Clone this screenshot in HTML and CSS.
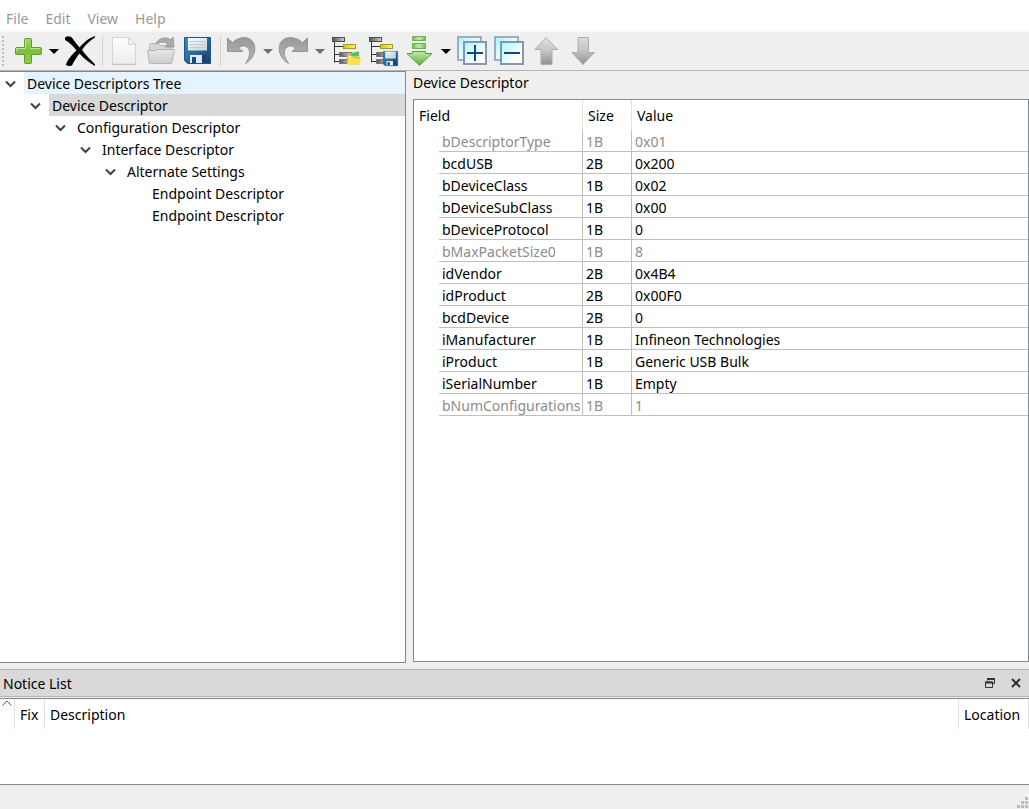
FILE: index.html
```html
<!DOCTYPE html>
<html lang="en">
<head>
<meta charset="utf-8">
<title>Device Descriptors</title>
<link rel="stylesheet" href="styles.css">
</head>
<body>
<svg class="defs" aria-hidden="true">
  <defs>
    <linearGradient id="green" x1="0" y1="0" x2="0" y2="1"><stop offset="0" stop-color="#a5d46b"/><stop offset=".5" stop-color="#7fbf3c"/><stop offset="1" stop-color="#94cd48"/></linearGradient>
    <linearGradient id="greenArrow" x1="0" y1="0" x2="0" y2="1"><stop offset="0" stop-color="#c6e8b6"/><stop offset="1" stop-color="#5aae2e"/></linearGradient>
    <linearGradient id="greenBar" x1="0" y1="0" x2="1" y2="0"><stop offset="0" stop-color="#6fbb4a"/><stop offset=".5" stop-color="#c4e9b2"/><stop offset="1" stop-color="#6fbb4a"/></linearGradient>
    <linearGradient id="paper" x1="0" y1="0" x2="0" y2="1"><stop offset="0" stop-color="#fdfdfd"/><stop offset="1" stop-color="#ededed"/></linearGradient>
    <linearGradient id="folder" x1="0" y1="0" x2="0" y2="1"><stop offset="0" stop-color="#e6e6e6"/><stop offset="1" stop-color="#cdcdcd"/></linearGradient>
    <linearGradient id="disk" x1="0" y1="0" x2="1" y2="1"><stop offset="0" stop-color="#3c8fc6"/><stop offset=".5" stop-color="#246a9f"/><stop offset="1" stop-color="#163f6b"/></linearGradient>
    <linearGradient id="label" x1="0" y1="0" x2="1" y2="1"><stop offset="0" stop-color="#ffffff"/><stop offset="1" stop-color="#c9d2d4"/></linearGradient>
    <linearGradient id="curve" x1="0" y1="0" x2="0" y2="1"><stop offset="0" stop-color="#999999"/><stop offset="1" stop-color="#b9b9b9"/></linearGradient>
    <linearGradient id="node" x1="0" y1="0" x2="1" y2="0"><stop offset="0" stop-color="#555555"/><stop offset="1" stop-color="#d2d2d2"/></linearGradient>
    <linearGradient id="yellow" x1="0" y1="0" x2="1" y2="0"><stop offset="0" stop-color="#d2c600"/><stop offset="1" stop-color="#fff36a"/></linearGradient>
    <linearGradient id="gold" x1="0" y1="0" x2="0" y2="1"><stop offset="0" stop-color="#fff06a"/><stop offset="1" stop-color="#f1cc28"/></linearGradient>
    <linearGradient id="pane" x1="0" y1="0" x2="1" y2="1"><stop offset="0" stop-color="#a4f5ff"/><stop offset=".7" stop-color="#ffffff"/></linearGradient>
    <linearGradient id="grayUp" x1="0" y1="0" x2="0" y2="1"><stop offset="0" stop-color="#e2e2e2"/><stop offset=".5" stop-color="#c4c4c4"/><stop offset="1" stop-color="#929292"/></linearGradient>
    <linearGradient id="grayDown" x1="0" y1="0" x2="0" y2="1"><stop offset="0" stop-color="#dadada"/><stop offset=".5" stop-color="#c4c4c4"/><stop offset="1" stop-color="#8f8f8f"/></linearGradient>
    <g id="hierarchy">
      <path d="M4.500 7v20.500M4.500 11.500h9M4.500 19.500h5M4.500 26.500h5" fill="none" stroke="#333"/>
      <rect x="2.500" y="2.500" width="12" height="4" fill="url(#node)" stroke="#4c4c4c"/>
      <rect x="13.500" y="9.500" width="12" height="4" fill="url(#yellow)" stroke="#a39a20"/>
      <rect x="9.500" y="17.500" width="12" height="4" fill="url(#node)" stroke="#777"/>
      <rect x="9.500" y="24.500" width="12" height="4" fill="url(#node)" stroke="#777"/>
    </g>
    <g id="floppy">
      <path d="M2.500 2.500h26v26h-23l-3-3z" fill="url(#disk)" stroke="#1c5687"/>
      <path d="M6 3h19v12.500H6z" fill="url(#label)"/>
      <path d="M7 6.500h17M7 9.500h17M7 12.500h17" stroke="#c5cccd"/>
      <path d="M8 20h12v8H8z" fill="#e4eaf4"/>
      <path d="M20 20h4v8h-4z" fill="#243d72"/>
      <path d="M10 22h4v6h-4z" fill="#24428c"/>
    </g>
    <path id="triangle" d="M2 14h10l-5 5z"/>
  </defs>
</svg>

<nav class="menubar" aria-label="Menu bar">
  <button class="menu" type="button">File</button>
  <button class="menu" type="button">Edit</button>
  <button class="menu" type="button">View</button>
  <button class="menu" type="button">Help</button>
</nav>

<div class="toolbar" role="toolbar" aria-label="Main toolbar">
  <span class="grip"></span>
  <button class="tool" type="button" aria-label="Add"><svg viewBox="0 0 32 32"><path d="M12.500 4.500q0-1 1-1h5q1 0 1 1v8h8.500q1.500 0 1.500 1.500v4q0 1.500-1.500 1.500h-8.500v8q0 1-1 1h-5q-1 0-1-1v-8H4.500q-1 0-1-1.500v-4q0-1.500 1-1.500h8z" fill="url(#green)" stroke="#58a01f"/><path d="M13.500 4.500v9h-9v3M18.500 13.500h9.500" fill="none" stroke="#c3e59a"/></svg></button>
  <button class="drop" type="button" aria-label="Add options"><svg viewBox="0 0 15 32"><use href="#triangle"/></svg></button>
  <button class="tool" type="button" aria-label="Delete"><svg viewBox="0 0 32 32"><path d="M1 2.500C4 .500 7 1 9 4c2 3 4 5.500 6.500 8.500C19.500 8 24.500 3 31 1v1.500C26.500 5 21.500 9.500 18 15c4 5.500 9 10 13 14.500v1.500C25.500 28 20 23.500 15.500 18.500 12 23 9.500 27 8 30.500c-2 .800-4.500.500-6-.5C3 25 8 19.500 12.500 15.500 9 11 5.500 7.500 1 5z" fill="#000"/></svg></button>
  <span class="separator"></span>
  <button class="tool" type="button" aria-label="New"><svg viewBox="0 0 32 32"><path d="M4.500 2.500h16l7 7v19.500h-23z" fill="url(#paper)" stroke="#d4d4d4"/><path d="M20.500 2.500q1 3-.500 7 4-1 7.500 0z" fill="#f7f7f7" stroke="#cfcfcf"/><path d="M4 29.500h24" stroke="#c5c5c5"/></svg></button>
  <button class="tool" type="button" aria-label="Open"><svg viewBox="0 0 32 32"><path d="M4.500 28V10.500l1-2h8l2 2h11v6" fill="#d5d5d5" stroke="#b6b6b6"/><path d="M11 9c2-6 10-8 15-4l2-3 1 10h-9l3-3c-4-3-8-2-12 0z" fill="#aaa" stroke="#999"/><path d="M2.500 15.500h8l2-1h17L26.500 28.500H4.500z" fill="url(#folder)" stroke="#b4b4b4"/></svg></button>
  <button class="tool" type="button" aria-label="Save"><svg viewBox="0 0 32 32"><use href="#floppy"/></svg></button>
  <span class="separator"></span>
  <button class="tool" type="button" aria-label="Undo"><svg viewBox="0 0 32 32"><path d="M1.500 3l5 4.500C14 .500 25 1 28 9c2.500 7-1 15-8.500 19.500 4.500-6.500 5.500-12 2.500-15.500-3-3-6.500-2.500-9.500 0l4.500 3.500H1.500z" fill="url(#curve)" stroke="#959595"/></svg></button>
  <button class="drop muted" type="button" aria-label="Undo history"><svg viewBox="0 0 15 32"><use href="#triangle"/></svg></button>
  <button class="tool" type="button" aria-label="Redo"><svg viewBox="0 0 32 32"><path d="M29.500 3l-5 4.500C17 .500 5 1 2 9c-2.500 7 1 15 8.500 19.500C6 22 5 16.500 8 13c3-3 6.500-2.500 9.500 0L14 16.500h15.500z" fill="url(#curve)" stroke="#959595"/></svg></button>
  <button class="drop muted" type="button" aria-label="Redo history"><svg viewBox="0 0 15 32"><use href="#triangle"/></svg></button>
  <button class="tool" type="button" aria-label="Load descriptor"><svg viewBox="0 0 32 32"><use href="#hierarchy"/><path d="M21 18l8-1.500v5h-7z" fill="#4cc65e"/><path d="M17.500 29.500V20.500h4l1.500 2h6.500v7z" fill="url(#gold)" stroke="#dfb82a"/><path d="M17 30l2-6h12l-1.500 6z" fill="#fbe04c"/></svg></button>
  <button class="tool" type="button" aria-label="Save descriptor"><svg viewBox="0 0 32 32"><use href="#hierarchy"/><use href="#floppy" transform="translate(15 15) scale(.55)"/></svg></button>
  <button class="tool" type="button" aria-label="Import"><svg viewBox="0 0 32 32"><path d="M8.500 1.500h13v4h-13z" fill="url(#greenBar)" stroke="#69b548"/><path d="M8.500 8.500h13v5h-13z" fill="url(#greenBar)" stroke="#69b548"/><path d="M8.500 16.500h13v2h6.500L15.500 30.500 3 18.500h5.500z" fill="url(#greenArrow)" stroke="#55a331"/></svg></button>
  <button class="drop" type="button" aria-label="Import options"><svg viewBox="0 0 15 32"><use href="#triangle"/></svg></button>
  <button class="tool" type="button" aria-label="Expand all"><svg viewBox="0 0 32 32"><path d="M2 2h23v23H2z" fill="url(#pane)" stroke="#9dabc4" stroke-width="2"/><path d="M8 7h22v22H8z" fill="url(#pane)" stroke="#8795b2" stroke-width="2"/><path d="M11 18h16M19 10v16" stroke="#0c4a80" stroke-width="2"/></svg></button>
  <button class="tool" type="button" aria-label="Collapse all"><svg viewBox="0 0 32 32"><path d="M2 2h23v23H2z" fill="url(#pane)" stroke="#9dabc4" stroke-width="2"/><path d="M8 7h22v22H8z" fill="url(#pane)" stroke="#8795b2" stroke-width="2"/><path d="M11 18h16" stroke="#0c4a80" stroke-width="2"/></svg></button>
  <button class="tool" type="button" aria-label="Move up"><svg viewBox="0 0 32 32"><path d="M16 2.500L27.500 14.500h-5.500v15H11v-15H5z" fill="url(#grayUp)" stroke="#adadad" stroke-linejoin="round"/></svg></button>
  <button class="tool" type="button" aria-label="Move down"><svg viewBox="0 0 32 32"><path d="M11 2.500h10.500v15h6L16 29.500 5 17.500h6z" fill="url(#grayDown)" stroke="#adadad" stroke-linejoin="round"/></svg></button>
</div>

<main class="workspace">
  <section class="tree" aria-label="Device descriptors">
    <ul class="tree-list">
      <li><div class="node hover"><button class="toggle" type="button" aria-label="Collapse"><svg viewBox="0 0 11 8"><path d="M1 1.500L5.500 6 10 1.500"/></svg></button><span class="node-label">Device Descriptors Tree</span></div>
        <ul>
          <li><div class="node selected"><button class="toggle" type="button" aria-label="Collapse"><svg viewBox="0 0 11 8"><path d="M1 1.500L5.500 6 10 1.500"/></svg></button><span class="node-label">Device Descriptor</span></div>
            <ul>
              <li><div class="node"><button class="toggle" type="button" aria-label="Collapse"><svg viewBox="0 0 11 8"><path d="M1 1.500L5.500 6 10 1.500"/></svg></button><span class="node-label">Configuration Descriptor</span></div>
                <ul>
                  <li><div class="node"><button class="toggle" type="button" aria-label="Collapse"><svg viewBox="0 0 11 8"><path d="M1 1.500L5.500 6 10 1.500"/></svg></button><span class="node-label">Interface Descriptor</span></div>
                    <ul>
                      <li><div class="node"><button class="toggle" type="button" aria-label="Collapse"><svg viewBox="0 0 11 8"><path d="M1 1.500L5.500 6 10 1.500"/></svg></button><span class="node-label">Alternate Settings</span></div>
                        <ul>
                          <li><div class="node leaf"><span class="node-label">Endpoint Descriptor</span></div></li>
                          <li><div class="node leaf"><span class="node-label">Endpoint Descriptor</span></div></li>
                        </ul>
                      </li>
                    </ul>
                  </li>
                </ul>
              </li>
            </ul>
          </li>
        </ul>
      </li>
    </ul>
  </section>

  <section class="details">
    <h1 class="details-title">Device Descriptor</h1>
    <div class="table-frame">
      <table class="fields">
        <colgroup><col class="col-indent"><col class="col-field"><col class="col-size"><col></colgroup>
        <thead><tr><th colspan="2">Field</th><th>Size</th><th>Value</th></tr></thead>
        <tbody>
          <tr class="readonly"><td></td><td>bDescriptorType</td><td>1B</td><td>0x01</td></tr>
          <tr><td></td><td>bcdUSB</td><td>2B</td><td>0x200</td></tr>
          <tr><td></td><td>bDeviceClass</td><td>1B</td><td>0x02</td></tr>
          <tr><td></td><td>bDeviceSubClass</td><td>1B</td><td>0x00</td></tr>
          <tr><td></td><td>bDeviceProtocol</td><td>1B</td><td>0</td></tr>
          <tr class="readonly"><td></td><td>bMaxPacketSize0</td><td>1B</td><td>8</td></tr>
          <tr><td></td><td>idVendor</td><td>2B</td><td>0x4B4</td></tr>
          <tr><td></td><td>idProduct</td><td>2B</td><td>0x00F0</td></tr>
          <tr><td></td><td>bcdDevice</td><td>2B</td><td>0</td></tr>
          <tr><td></td><td>iManufacturer</td><td>1B</td><td>Infineon Technologies</td></tr>
          <tr><td></td><td>iProduct</td><td>1B</td><td>Generic USB Bulk</td></tr>
          <tr><td></td><td>iSerialNumber</td><td>1B</td><td>Empty</td></tr>
          <tr class="readonly"><td></td><td>bNumConfigurations</td><td>1B</td><td>1</td></tr>
        </tbody>
      </table>
    </div>
  </section>
</main>

<section class="dock">
  <header class="dock-header">
    <h2 class="dock-title">Notice List</h2>
    <button class="dock-button" type="button" aria-label="Float"><svg viewBox="0 0 12 12"><path d="M3.500 3.500v-2h7v5h-2M1.500 5h7v5.500h-7z" fill="none" stroke="#333"/><path d="M3 2h8M1 5.500h8" stroke="#333" stroke-width="2"/></svg></button>
    <button class="dock-button" type="button" aria-label="Close"><svg viewBox="0 0 12 12"><path d="M2 2l8 8M10 2l-8 8" stroke="#333" stroke-width="2"/></svg></button>
  </header>
  <div class="notices-frame">
    <table class="notices">
      <colgroup><col class="col-sort"><col class="col-fix"><col><col class="col-location"></colgroup>
      <thead><tr><th class="sort" aria-label="Severity"><svg viewBox="0 0 10 6"><path d="M.500 5.500L5 1l4.500 4.500"/></svg></th><th>Fix</th><th>Description</th><th>Location</th></tr></thead>
    </table>
  </div>
</section>

<footer class="statusbar"><svg class="size-grip" viewBox="0 0 11 11" aria-hidden="true"><path d="M8 0h3v3H8zM4 4h3v3H4zM8 4h3v3H8zM0 8h3v3H0zM4 8h3v3H4zM8 8h3v3H8z"/></svg></footer>
</body>
</html>
```
FILE: styles.css
```css
* {
  box-sizing: border-box;
}

body {
  display: flex;
  flex-direction: column;
  height: 100vh;
  margin: 0;
  background: #efefef;
  color: #000;
  font: 14px/22px "Noto Sans", "Open Sans", sans-serif;
  overflow: hidden;
}

button {
  border: 0;
  padding: 0;
  background: none;
  color: inherit;
  font: inherit;
}

svg {
  display: block;
}

ul {
  margin: 0;
  padding: 0;
  list-style: none;
}

.defs {
  position: absolute;
  width: 0;
  height: 0;
}

.menubar {
  display: flex;
  gap: 17px;
  padding: 8px 6px 0;
  height: 30px;
  background: #fff;
  color: #999;
}

.toolbar {
  display: flex;
  align-items: center;
  height: 41px;
  border-top: 2px solid #f7f7f7;
  border-bottom: 1px solid #b4b4b4;
}

.grip {
  width: 10px;
  height: 30px;
  background: conic-gradient(#bdbdbd 25%, transparent 0) -2px 2px / 8px 4px repeat-y;
  background: linear-gradient(#bdbdbd 2px, transparent 2px) 2px 0 / 2px 4px repeat-y;
}

.tool {
  padding: 0 3px 0 2px;
}

.tool svg {
  width: 32px;
  height: 32px;
}

.drop svg {
  width: 15px;
  height: 32px;
}

.drop.muted {
  fill: #707070;
}

.separator {
  width: 7px;
  height: 30px;
  background: linear-gradient(#d0d0d0, #d0d0d0) 3px 0 / 1px 100% no-repeat;
}

.workspace {
  display: flex;
  flex: 1;
  gap: 7px;
  min-height: 0;
  padding-bottom: 6px;
}

.tree {
  width: 406px;
  border: solid #828790;
  border-width: 1px 1px 1px 0;
  background: #fff;
}

.tree-list ul {
  padding-left: 25px;
}

.node {
  display: flex;
  height: 22px;
}

.toggle {
  display: flex;
  align-items: center;
  width: 24px;
  padding: 2px 0 0 5px;
}

.toggle svg {
  width: 11px;
  height: 8px;
  fill: none;
  stroke: #404040;
  stroke-width: 2;
}

.node-label {
  flex: 1;
  padding: 1px 0 0 3px;
}

.leaf {
  padding-left: 24px;
}

.hover .node-label {
  background: #e5f3ff;
}

.selected .node-label {
  background: #d9d9d9;
}

.details {
  display: flex;
  flex: 1;
  flex-direction: column;
  padding-bottom: 1px;
}

.details-title,
.dock-title {
  margin: 0;
  font-size: 14px;
  font-weight: 400;
}

.details-title {
  height: 28px;
  padding-top: 1px;
}

.table-frame {
  flex: 1;
  border: 1px solid #828790;
  background: #fff;
}

table {
  width: 100%;
  border-collapse: separate;
  border-spacing: 0;
  table-layout: fixed;
}

th {
  height: 30px;
  padding: 2px 5px 0;
  border-right: 1px solid #e0e0e0;
  font-weight: 400;
  text-align: left;
}

.fields th:last-child {
  border-right: 0;
}

.col-indent {
  width: 25px;
}

.col-field {
  width: 144px;
}

.col-size {
  width: 49px;
}

td {
  height: 22px;
  padding: 2px 3px 0;
  border-right: 1px solid #c0c0c0;
  border-bottom: 1px solid #c0c0c0;
  line-height: 19px;
  white-space: nowrap;
}

td:first-child {
  border: 0;
}

td:last-child {
  border-right: 0;
}

.readonly {
  color: #8c8c8c;
}

.dock-header {
  display: flex;
  align-items: center;
  gap: 14px;
  height: 28px;
  padding: 0 7px 0 3px;
  border: solid #b4b4b4;
  border-width: 1px 0;
  background: #d9d9d9;
}

.dock-title {
  flex: 1;
  padding-top: 2px;
}

.dock-button svg {
  width: 12px;
  height: 12px;
}

.notices-frame {
  height: 87px;
  margin-top: 1px;
  border: solid #828790;
  border-width: 1px 0;
  background: #fff;
}

.notices .sort {
  padding: 1px 2px;
  vertical-align: top;
}

.sort svg {
  width: 10px;
  height: 6px;
  fill: none;
  stroke: #555;
}

.col-sort {
  width: 15px;
}

.col-fix {
  width: 30px;
}

.col-location {
  width: 70px;
}

.statusbar {
  display: flex;
  align-items: flex-end;
  justify-content: flex-end;
  height: 24px;
  padding: 1px;
}

.size-grip {
  width: 11px;
  height: 11px;
  fill: #bdbdbd;
}
```
